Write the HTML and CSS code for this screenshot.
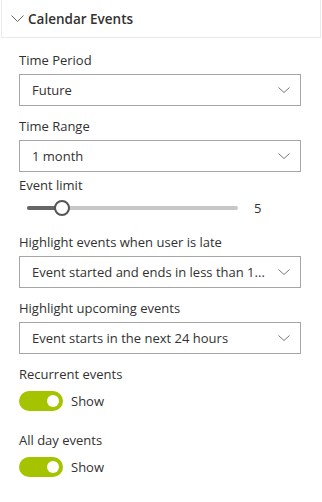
FILE: index.html
```html
<!DOCTYPE html>
<html>
<head>
<meta charset="utf-8">
<link rel="stylesheet" href="styles.css">
</head>
<body>
<div class="pane">
  <div class="header">
    <svg class="hchev" width="13" height="9" viewBox="0 0 13 9"><path d="M0.5 1.5 L6.5 7.5 L12.5 1.5" fill="none" stroke="#666" stroke-width="1"/></svg>
    <span class="title">Calendar Events</span>
  </div>
  <div class="body">
    <div class="field">
      <div class="label">Time Period</div>
      <div class="dropdown"><span class="value">Future</span><svg class="chev" width="12" height="8" viewBox="0 0 12 8"><path d="M0.5 1.5 L6 6.5 L11.5 1.5" fill="none" stroke="#777" stroke-width="1"/></svg></div>
    </div>
    <div class="field before-slider">
      <div class="label">Time Range</div>
      <div class="dropdown"><span class="value">1 month</span><svg class="chev" width="12" height="8" viewBox="0 0 12 8"><path d="M0.5 1.5 L6 6.5 L11.5 1.5" fill="none" stroke="#777" stroke-width="1"/></svg></div>
    </div>
    <div class="field slider-field">
      <div class="label">Event limit</div>
      <div class="slider-row">
        <div class="track">
          <div class="fill" style="width:35px"></div>
          <div class="thumb" style="left:35px"></div>
        </div>
        <span class="slider-value">5</span>
      </div>
    </div>
    <div class="field">
      <div class="label">Highlight events when user is late</div>
      <div class="dropdown"><span class="value">Event started and ends in less than 1...</span><svg class="chev" width="12" height="8" viewBox="0 0 12 8"><path d="M0.5 1.5 L6 6.5 L11.5 1.5" fill="none" stroke="#777" stroke-width="1"/></svg></div>
    </div>
    <div class="field">
      <div class="label">Highlight upcoming events</div>
      <div class="dropdown"><span class="value">Event starts in the next 24 hours</span><svg class="chev" width="12" height="8" viewBox="0 0 12 8"><path d="M0.5 1.5 L6 6.5 L11.5 1.5" fill="none" stroke="#777" stroke-width="1"/></svg></div>
    </div>
    <div class="field toggle-field">
      <div class="label">Recurrent events</div>
      <div class="toggle-row"><span class="toggle"><span class="knob"></span></span><span class="toggle-text">Show</span></div>
    </div>
    <div class="field toggle-field">
      <div class="label">All day events</div>
      <div class="toggle-row"><span class="toggle"><span class="knob"></span></span><span class="toggle-text">Show</span></div>
    </div>
  </div>
</div>
</body>
</html>
```
FILE: styles.css
```css
* { box-sizing: border-box; }
html, body { margin: 0; padding: 0; background: #fff; }
body {
  font-family: "Open Sans", "Noto Sans", sans-serif;
  font-size: 13px;
  color: #323130;
  width: 322px;
}
.pane { width: 322px; }
.header {
  height: 38px;
  margin: 0 1px;
  border: 1px solid #eaeaea;
  border-top: none;
  display: flex;
  align-items: center;
  padding-left: 9px;
  gap: 4px;
}
.hchev { flex: none; margin-top: -1px; }
.title {
  font-weight: 600;
  font-size: 13.5px;
  color: #323130;
}
.body { padding: 12px 21px 0 19px; }
.field { margin-bottom: 10px; }
.label { line-height: 20px; height: 20px; margin-bottom: 4px; }
.dropdown {
  height: 32px;
  border: 1px solid #a6a6a6;
  display: flex;
  align-items: center;
  padding: 0 10px 0 12px;
}
.value { flex: 1; white-space: nowrap; overflow: hidden; }
.chev { flex: none; }
.before-slider { margin-bottom: 3px; }
.slider-field { margin-bottom: 12px; }
.slider-field .label { margin-bottom: 1px; }
.slider-row { display: flex; align-items: center; height: 24px; padding-left: 8px; }
.track {
  position: relative;
  width: 211px;
  height: 4px;
  border-radius: 2px;
  background: #c8c8c8;
}
.fill { height: 4px; border-radius: 2px; background: #666; }
.thumb {
  position: absolute;
  top: -6px;
  width: 16px;
  height: 16px;
  margin-left: -8px;
  border-radius: 50%;
  border: 2px solid #555;
  background: #fff;
}
.slider-value { margin-left: 16px; }
.toggle-field .label { margin-bottom: 7px; }
.toggle-field { margin-bottom: 19px; }
.toggle-row { display: flex; align-items: center; gap: 8px; height: 20px; }
.toggle {
  width: 44px;
  height: 20px;
  border-radius: 10px;
  background: #a6c300;
  display: flex;
  align-items: center;
  justify-content: flex-end;
  padding-right: 4px;
}
.knob { width: 12px; height: 12px; border-radius: 50%; background: #fff; }
.toggle-text { line-height: 20px; }
```
